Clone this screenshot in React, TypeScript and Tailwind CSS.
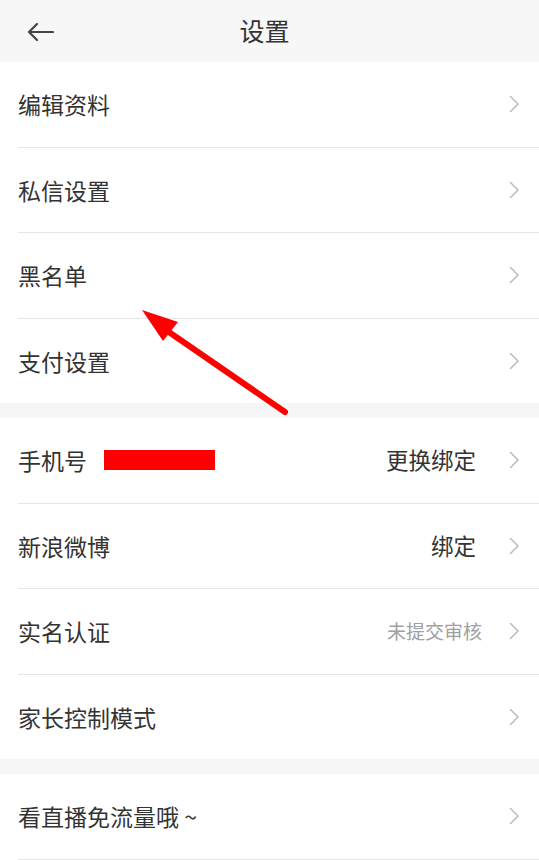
import React from "react";

interface Row {
  label: string;
  value?: string;
  muted?: boolean;
  redact?: boolean;
}

const groups: Row[][] = [
  [
    { label: "编辑资料" },
    { label: "私信设置" },
    { label: "黑名单" },
    { label: "支付设置" },
  ],
  [
    { label: "手机号", value: "更换绑定", redact: true },
    { label: "新浪微博", value: "绑定" },
    { label: "实名认证", value: "未提交审核", muted: true },
    { label: "家长控制模式" },
  ],
  [{ label: "看直播免流量哦 ~" }],
];

const Chevron = () => (
  <svg width="11" height="18" viewBox="0 0 11 18" fill="none" className="shrink-0">
    <path d="M1.5 1.5 L9 9 L1.5 16.5" stroke="#bdbdbd" strokeWidth="1.6" strokeLinecap="round" strokeLinejoin="round" />
  </svg>
);

const SettingRow = ({ row }: { row: Row }) => (
  <div className="flex h-[84.5px] items-center pr-[19px] pl-[18px]">
    <span className="text-[23px] text-[#333333]">{row.label}</span>
    {row.redact && <span className="ml-[17px] h-[20px] w-[111px] bg-[#ff0000]" />}
    <span className="flex-1" />
    {row.value && (
      <span className={row.muted ? "mr-[27px] text-[19px] text-[#a0a0a0]" : "mr-[33px] text-[22.5px] text-[#333333]"}>
        {row.value}
      </span>
    )}
    <Chevron />
  </div>
);

const App = () => {
  return (
    <div
      className="relative h-[860px] w-[539px] overflow-hidden bg-[#f6f6f6]"
      style={{ fontFamily: '"Noto Sans CJK SC", "Noto Sans", sans-serif' }}
    >
      {/* Header */}
      <div className="relative flex h-[62px] items-center justify-center bg-[#f7f7f7] pr-[10px]">
        <svg width="28" height="24" viewBox="0 0 28 24" fill="none" className="absolute top-[20px] left-[26px]">
          <path d="M27 12 H3 M11 4 L3 12 L11 20" stroke="#444" strokeWidth="2.2" strokeLinecap="round" strokeLinejoin="round" />
        </svg>
        <span className="text-[25px] text-[#333333]">设置</span>
      </div>

      {groups.map((group, gi) => (
        <div key={gi} className={gi > 0 ? "mt-[15px] bg-white" : "bg-white"}>
          {group.map((row, ri) => (
            <div key={row.label}>
              {ri > 0 && <div className="ml-[18px] h-px bg-[#e6e6e6]" />}
              <SettingRow row={row} />
            </div>
          ))}
          {gi === groups.length - 1 && <div className="ml-[18px] h-px bg-[#e6e6e6]" />}
        </div>
      ))}

      {/* Annotation arrow */}
      <svg className="pointer-events-none absolute top-0 left-0" width="539" height="860" viewBox="0 0 539 860">
        <line x1="285" y1="412" x2="166" y2="330" stroke="#ff0000" strokeWidth="6" strokeLinecap="round" />
        <polygon points="142,310 178,322 163,341" fill="#ff0000" />
      </svg>
    </div>
  );
};

export default App;
